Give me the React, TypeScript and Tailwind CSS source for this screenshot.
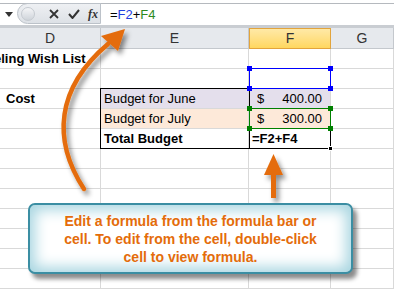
import React from 'react'

const FONT = { fontFamily: '"Liberation Sans", Arial, sans-serif' }

const GRID = 'grid grid-cols-[101px_148px_82px_63px]'
const CELL = 'h-[20px] border-r border-b border-[#d9d9d9] flex items-center text-[13px] text-black overflow-visible whitespace-nowrap'

function FormulaBar() {
  return (
    <div className="h-[25px] bg-white border-t border-[#b5b9be] mt-[3px] border-b-[3px] border-b-[#c9cdd2] flex items-stretch relative">
      <div className="w-[17px] flex items-center justify-center">
        <svg width="8" height="5" viewBox="0 0 8 5"><path d="M0 0h8L4 5z" fill="#333" /></svg>
      </div>
      <div className="w-[84px] -mt-px mb-[1px] bg-gradient-to-b from-[#eef0f3] to-[#dde1e6] border border-[#bcc2c9] rounded-l-full flex items-center">
        <div className="w-[14px] h-[14px] ml-[3px] rounded-full bg-gradient-to-b from-[#f4f5f7] to-[#cfd4da] border border-[#c5cad0]" />
        <svg className="ml-[14px]" width="10" height="10" viewBox="0 0 10 10">
          <path d="M1 1l8 8M9 1l-8 8" stroke="#333" strokeWidth="1.8" />
        </svg>
        <svg className="ml-[9px]" width="12" height="10" viewBox="0 0 12 10">
          <path d="M1 5l3.5 4L11 1" stroke="#333" strokeWidth="2" fill="none" />
        </svg>
        <span className="ml-[8px] text-[12px] italic font-bold text-[#333]" style={{ fontFamily: '"Liberation Serif", serif' }}>
          fx
        </span>
      </div>
      <div className="flex-1 flex items-center pl-[9px] text-[13px]" style={FONT}>
        <span className="text-black">=</span>
        <span className="text-[#1f3fe0]">F2</span>
        <span className="text-black">+</span>
        <span className="text-[#2d8a1f]">F4</span>
      </div>
    </div>
  )
}

function HeaderRow() {
  const h = 'h-[21px] flex items-center justify-center text-[14px] text-[#333] border-r border-b border-[#c4c8cd]'
  return (
    <div className={GRID + ' bg-[#e6e9ed]'} style={FONT}>
      <div className={h}>D</div>
      <div className={h}>E</div>
      <div className={h + ' bg-gradient-to-b from-[#ffe9a6] to-[#ffd75e] border border-[#e2a43c]'}>F</div>
      <div className={h}>G</div>
    </div>
  )
}

const rows = [
  { d: <span className="font-bold -ml-[6px]">eling Wish List</span> },
  {},
  { d: <span className="font-bold pl-[6px]">Cost</span>, e: 'Budget for June', eBg: 'bg-[#e4dfec]', f: '400.00' },
  { e: 'Budget for July', eBg: 'bg-[#fde9d9]', f: '300.00' },
  { e: <span className="font-bold">Total Budget</span>, f: 'formula' },
  {}, {}, {}, {}, {}, {}, {},
]

function Sheet() {
  return (
    <div className="relative" style={FONT}>
      {rows.map((r, i) => (
        <div key={i} className={GRID}>
          <div className={CELL}>{r.d}</div>
          <div className={CELL + ' pl-[3px] text-[13.5px] ' + (r.eBg ?? 'bg-white')}>{r.e}</div>
          <div className={CELL + ' text-[13.5px] ' + (r.eBg ?? 'bg-white')}>
            {r.f === 'formula' ? (
              <span className="font-bold pl-[3px]">=F2+F4</span>
            ) : r.f ? (
              <div className="flex w-full px-[8px] justify-between">
                <span>$</span>
                <span>{r.f}</span>
              </div>
            ) : null}
          </div>
          <div className={CELL} />
        </div>
      ))}

      {/* E range border */}
      <div className="absolute left-[100px] top-[39px] w-[150px] h-[61px] border border-black pointer-events-none" />
      {/* F5 active cell */}
      <div className="absolute left-[249px] top-[79px] w-[82px] h-[21px] border border-black border-t-[#e8a0e0] pointer-events-none">
        <div className="absolute -right-[3px] -bottom-[3px] w-[5px] h-[5px] bg-black border border-white" />
      </div>
      {/* F2 reference */}
      <div className="absolute left-[249px] top-[19px] w-[82px] h-[21px] border border-[#0000ff] pointer-events-none">
        <div className="absolute -left-[3px] -top-[3px] w-[5px] h-[5px] bg-[#0000ff]" />
        <div className="absolute -right-[3px] -top-[3px] w-[5px] h-[5px] bg-[#0000ff]" />
        <div className="absolute -left-[3px] -bottom-[3px] w-[5px] h-[5px] bg-[#0000ff]" />
        <div className="absolute -right-[3px] -bottom-[3px] w-[5px] h-[5px] bg-[#0000ff]" />
      </div>
      {/* F4 reference */}
      <div className="absolute left-[249px] top-[59px] w-[82px] h-[21px] border border-[#008000] pointer-events-none">
        <div className="absolute -left-[3px] -top-[3px] w-[5px] h-[5px] bg-[#008000]" />
        <div className="absolute -right-[3px] -top-[3px] w-[5px] h-[5px] bg-[#008000]" />
        <div className="absolute -left-[3px] -bottom-[3px] w-[5px] h-[5px] bg-[#008000]" />
        <div className="absolute -right-[3px] -bottom-[3px] w-[5px] h-[5px] bg-[#008000]" />
      </div>
    </div>
  )
}

function Arrows() {
  return (
    <svg className="absolute left-0 top-0 pointer-events-none" width="394" height="290" viewBox="0 0 394 290">
      <defs>
        <filter id="sh" x="-20%" y="-20%" width="140%" height="140%">
          <feDropShadow dx="3" dy="4" stdDeviation="2.5" floodColor="#000" floodOpacity="0.45" />
        </filter>
      </defs>
      <g filter="url(#sh)">
        <path d="M84 189 C52 140 56 88 108 44" stroke="#e46c0a" strokeWidth="4.5" fill="none" strokeLinecap="round" />
        <path d="M125 29 L101 36 L118 51 Z" fill="#e46c0a" />
        <rect x="271" y="172" width="5" height="26" fill="#e46c0a" />
        <path d="M273.5 154 L264 175 L283 175 Z" fill="#e46c0a" />
      </g>
    </svg>
  )
}

function Callout() {
  return (
    <div
      className="absolute left-[28px] top-[203px] w-[325px] h-[71px] rounded-[7px] border-2 border-[#3b8ea3] bg-white shadow-[inset_0_0_14px_5px_#a9d6e1,4px_5px_4px_rgba(0,0,0,0.45)] flex flex-col items-center justify-center text-center text-[14px] leading-[18px] font-bold text-[#e46c0a]"
      style={FONT}
    >
      <div>Edit a formula from the formula bar or</div>
      <div>cell. To edit from the cell, double-click</div>
      <div>cell to view formula.</div>
    </div>
  )
}

export default function App() {
  return (
    <div className="w-[394px] h-[290px] overflow-hidden bg-white relative">
      <FormulaBar />
      <HeaderRow />
      <Sheet />
      <Arrows />
      <Callout />
    </div>
  )
}
